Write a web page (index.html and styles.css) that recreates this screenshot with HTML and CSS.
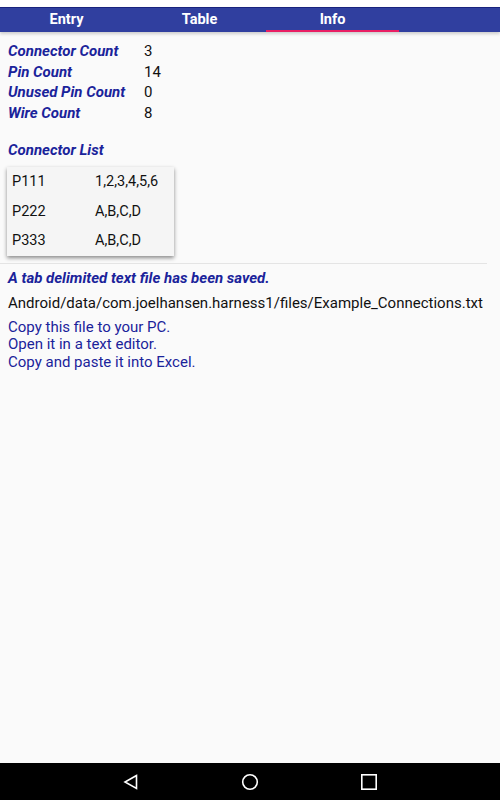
FILE: index.html
```html
<!DOCTYPE html>
<html>
<head>
<meta charset="utf-8">
<link rel="stylesheet" href="styles.css">
</head>
<body>
<div class="screen">
  <div class="statusbar"></div>
  <div class="tabbar">
    <div class="tab">Entry</div>
    <div class="tab">Table</div>
    <div class="tab active">Info</div>
  </div>
  <main class="content">
    <div class="stats">
      <div class="label">Connector Count</div><div class="value">3</div>
      <div class="label">Pin Count</div><div class="value">14</div>
      <div class="label">Unused Pin Count</div><div class="value">0</div>
      <div class="label">Wire Count</div><div class="value">8</div>
    </div>
    <div class="label list-title">Connector List</div>
    <div class="card">
      <div class="row"><span class="name">P111</span><span>1,2,3,4,5,6</span></div>
      <div class="row"><span class="name">P222</span><span>A,B,C,D</span></div>
      <div class="row"><span class="name">P333</span><span>A,B,C,D</span></div>
    </div>
    <div class="divider"></div>
    <div class="label saved">A tab delimited text file has been saved.</div>
    <div class="path">Android/data/com.joelhansen.harness1/files/Example_Connections.txt</div>
    <div class="help">
      <div>Copy this file to your PC.</div>
      <div>Open it in a text editor.</div>
      <div>Copy and paste it into Excel.</div>
    </div>
  </main>
  <nav class="navbar">
    <svg width="18" height="18" viewBox="0 0 18 18"><path d="M14.5 2.5 L3 9 L14.5 15.5 Z" fill="none" stroke="#fff" stroke-width="1.6" stroke-linejoin="miter"/></svg>
    <svg width="18" height="18" viewBox="0 0 18 18"><circle cx="9" cy="9" r="7.3" fill="none" stroke="#fff" stroke-width="1.6"/></svg>
    <svg width="18" height="18" viewBox="0 0 18 18"><rect x="1.8" y="1.8" width="14.4" height="14.4" fill="none" stroke="#fff" stroke-width="1.6"/></svg>
  </nav>
</div>
</body>
</html>
```
FILE: styles.css
```css
* { box-sizing: border-box; }
html, body { margin: 0; padding: 0; }
body {
  font-family: Roboto, "Liberation Sans", sans-serif;
  font-size: 15px;
  background: #fafafa;
}
.screen {
  width: 500px;
  height: 800px;
  display: flex;
  flex-direction: column;
  background: #fafafa;
}
.statusbar {
  height: 7px;
  background: #ffffff;
}
.tabbar {
  height: 25px;
  background: #303f9f;
  border-top: 1px solid #1a237e;
  display: flex;
  box-shadow: 0 2px 3px rgba(0,0,0,0.18);
  position: relative;
  z-index: 1;
}
.tab {
  width: 133px;
  color: #fff;
  font-weight: bold;
  font-size: 14.5px;
  text-align: center;
  line-height: 22px;
  padding-top: 1px;
  border-bottom: 2px solid transparent;
}
.tab.active {
  border-bottom-color: #e91e63;
}
.content {
  flex: 1;
  padding: 9px 0 0 0;
}
.stats {
  display: grid;
  grid-template-columns: 136px auto;
  line-height: 20.5px;
  padding-left: 8px;
}
.label {
  color: #1a239a;
  font-weight: bold;
  font-style: italic;
}
.value {
  color: #111;
}
.list-title {
  line-height: 20.5px;
  margin-top: 16.5px;
  padding-left: 8px;
}
.card {
  margin: 7px 0 0 7px;
  width: 167px;
  background: #f5f5f5;
  box-shadow: 0 2px 4px rgba(0,0,0,0.45);
  font-size: 14.5px;
}
.row {
  height: 29.5px;
  line-height: 29.5px;
  display: flex;
  padding-left: 5px;
  color: #111;
}
.row .name {
  width: 83px;
}
.divider {
  height: 1px;
  background: #e4e4e4;
  margin: 7px 13px 0 0;
}
.saved {
  padding-left: 8px;
  margin-top: 4px;
  line-height: 20px;
}
.path {
  padding-left: 8px;
  margin-top: 5px;
  line-height: 20px;
  color: #111;
}
.help {
  padding-left: 8px;
  margin-top: 6px;
  line-height: 17.5px;
  color: #1a239a;
}
.navbar {
  height: 37px;
  background: #000;
  display: flex;
  align-items: center;
  justify-content: center;
  gap: 101px;
  padding-top: 1px;
}
```
